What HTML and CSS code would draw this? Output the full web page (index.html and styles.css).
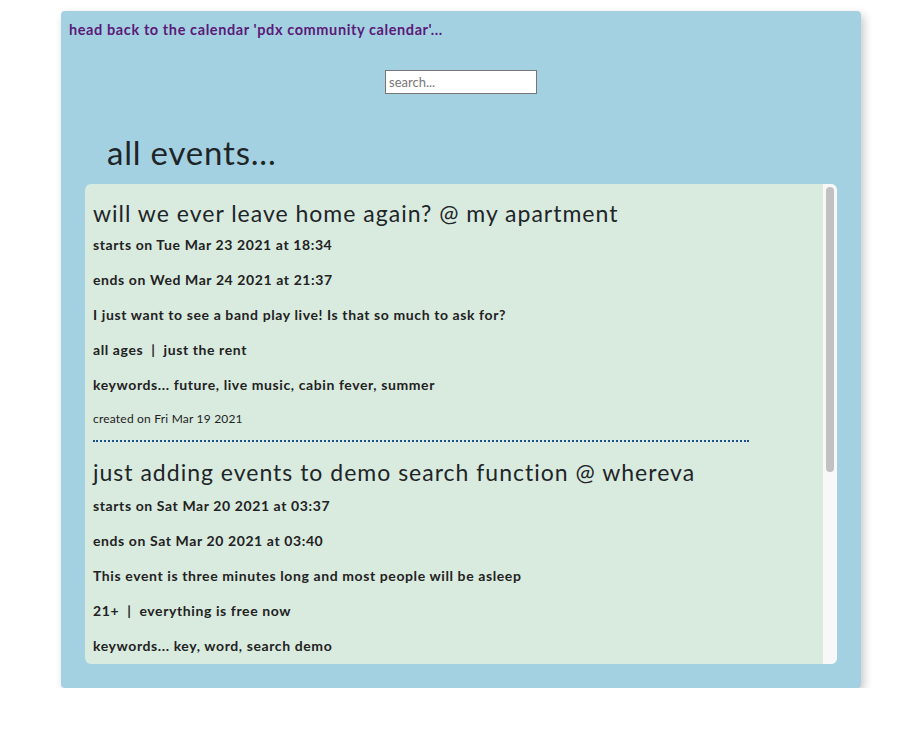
FILE: index.html
```html
<!DOCTYPE html>
<html>
<head>
<meta charset="utf-8">
<link rel="stylesheet" href="styles.css">
</head>
<body>
<div class="page">
  <a class="back" href="#">head back to the calendar 'pdx community calendar'...</a>
  <div class="search-row"><input class="search" type="text" placeholder="search..."></div>
  <h2 class="title">all events...</h2>
  <div class="list">
    <div class="scroll">
      <div class="event">
        <h3>will we ever leave home again? @ my apartment</h3>
        <p>starts on Tue Mar 23 2021 at 18:34</p>
        <p>ends on Wed Mar 24 2021 at 21:37</p>
        <p>I just want to see a band play live! Is that so much to ask for?</p>
        <p>all ages &nbsp;|&nbsp; just the rent</p>
        <p>keywords... future, live music, cabin fever, summer</p>
        <p class="created">created on Fri Mar 19 2021</p>
        <div class="divider"></div>
      </div>
      <div class="event">
        <h3>just adding events to demo search function @ whereva</h3>
        <p>starts on Sat Mar 20 2021 at 03:37</p>
        <p>ends on Sat Mar 20 2021 at 03:40</p>
        <p>This event is three minutes long and most people will be asleep</p>
        <p>21+ &nbsp;|&nbsp; everything is free now</p>
        <p>keywords... key, word, search demo</p>
        <p class="created">created on Fri Mar 19 2021</p>
        <div class="divider"></div>
      </div>
    </div>
    <div class="track"><div class="thumb"></div></div>
  </div>
</div>
</body>
</html>
```
FILE: styles.css
```css
html, body {
  margin: 0;
  padding: 0;
  background: #ffffff;
}
body {
  font-family: Lato, "Noto Sans", sans-serif;
  color: #222;
}
.page {
  width: 800px;
  height: 677px;
  box-sizing: border-box;
  margin: 11px 0 0 61px;
  background: #a4d1e1;
  border-radius: 4px;
  box-shadow: 3px 4px 10px rgba(0,0,0,0.22);
  padding: 8px 24px 24px;
  display: flex;
  flex-direction: column;
}
.back {
  display: block;
  margin-left: -16px;
  font-size: 14.5px;
  font-weight: 700;
  line-height: 22px;
  letter-spacing: 0.6px;
  color: #5a1a78;
  text-decoration: none;
}
.search-row {
  display: flex;
  justify-content: center;
  margin-top: 29px;
}
.search {
  width: 152px;
  height: 24px;
  box-sizing: border-box;
  border: 1px solid #767676;
  padding: 1px 3px;
  font-family: Lato, sans-serif;
  font-size: 13px;
  background: #fff;
}
.search::placeholder { color: #777; }
.title {
  margin: 38px 0 0 22px;
  font-size: 33px;
  font-weight: 400;
  line-height: 40px;
  letter-spacing: 0.8px;
  color: #1e2528;
}
.list {
  margin-top: 12px;
  flex: 1;
  min-height: 0;
  background: #d9eadf;
  border-radius: 6px;
  overflow: hidden;
  display: flex;
}
.scroll {
  flex: 1;
  min-width: 0;
  overflow: hidden;
  padding: 0 8px;
}
.track {
  width: 14px;
  flex: none;
  background: #f8f8f8;
  padding: 3px 3px 0;
  box-sizing: border-box;
}
.thumb {
  height: 285px;
  background: #c1c1c1;
  border-radius: 4px;
}
.event h3 {
  margin: 16px 0 10px;
  font-size: 23px;
  font-weight: 400;
  line-height: 26px;
  letter-spacing: 1px;
  color: #1e2528;
  white-space: nowrap;
}
.event + .event h3 { margin: 17px 0 12px; }
.event p {
  margin: 0 0 18px;
  font-size: 14px;
  font-weight: 700;
  line-height: 17px;
  letter-spacing: 0.6px;
  color: #222;
  white-space: nowrap;
}
.event p.created {
  font-size: 12px;
  font-weight: 400;
  line-height: 15px;
  letter-spacing: 0.2px;
  margin-bottom: 14px;
}
.divider {
  width: 656px;
  border-bottom: 2px dotted #1d4f8f;
}
```
